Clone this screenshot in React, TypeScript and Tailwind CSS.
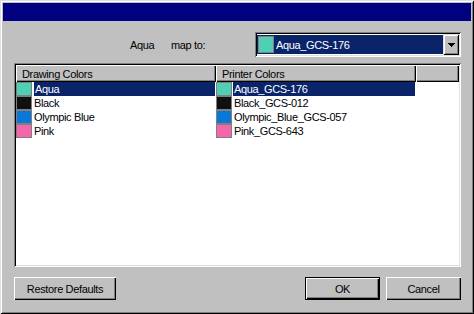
import React from "react";

const rows = [
  { name: "Aqua", printer: "Aqua_GCS-176", color: "#4fd0b4", selected: true },
  { name: "Black", printer: "Black_GCS-012", color: "#101010", selected: false },
  { name: "Olympic Blue", printer: "Olympic_Blue_GCS-057", color: "#0a78d8", selected: false },
  { name: "Pink", printer: "Pink_GCS-643", color: "#f466aa", selected: false },
];

function Cell({ color, label, selected, focus }: { color: string; label: string; selected: boolean; focus?: boolean }) {
  return (
    <div className="flex w-[200px] h-[14px]">
      <div className="w-[16px] h-[14px] border border-[#808080]" style={{ backgroundColor: color }} />
      <div
        className={
          "ml-[1px] w-[182px] h-[14px] pl-[1px] whitespace-nowrap " +
          (selected ? "bg-[#0a246a] text-white " : "text-black ") +
          (focus ? "border-l border-white" : "")
        }
      >
        {label}
      </div>
    </div>
  );
}

export default function App() {
  return (
    <div className="w-[474px] h-[314px] bg-[#c0c0c0] p-[3px] flex flex-col font-['Liberation_Sans',Arial,sans-serif] text-[11px] leading-[14px] tracking-[-0.35px] text-black shadow-[inset_1px_1px_#dfdfdf,inset_-1px_-1px_#000,inset_2px_2px_#fff,inset_-2px_-2px_#808080]">
      <div className="h-[18px] bg-[#000080] shrink-0" />
      <div className="flex-1 flex flex-col pl-[11px] pr-[10px] pt-[11px]">
        <div className="flex items-center h-[25px]">
          <span className="ml-[116px] w-[41px]">Aqua</span>
          <span className="w-[84px]">map to:</span>
          <div className="w-[206px] h-[25px] p-[2px] flex shadow-[inset_1px_1px_#808080,inset_-1px_-1px_#fff,inset_2px_2px_#000,inset_-2px_-2px_#dfdfdf]">
            <div className="flex-1 bg-white flex">
              <div className="flex-1 my-[1px] bg-[#0a246a] flex items-center text-white">
                <div className="ml-[1px] w-[16px] h-[17px] border border-[#808080] bg-[#4fd0b4]" />
                <span className="ml-[2px]">Aqua_GCS-176</span>
              </div>
              <div className="w-[16px] flex items-center justify-center shadow-[inset_1px_1px_#dfdfdf,inset_-1px_-1px_#000,inset_2px_2px_#fff,inset_-2px_-2px_#808080] bg-[#c0c0c0]">
                <svg width="7" height="4" viewBox="0 0 7 4" shapeRendering="crispEdges">
                  <rect x="0" y="0" width="7" height="1" fill="#000" />
                  <rect x="1" y="1" width="5" height="1" fill="#000" />
                  <rect x="2" y="2" width="3" height="1" fill="#000" />
                  <rect x="3" y="3" width="1" height="1" fill="#000" />
                </svg>
              </div>
            </div>
          </div>
        </div>

        <div className="mt-[6px] h-[204px] p-[2px] bg-white flex flex-col shadow-[inset_1px_1px_#808080,inset_-1px_-1px_#fff,inset_2px_2px_#000,inset_-2px_-2px_#dfdfdf]">
          <div className="flex h-[17px] shrink-0 bg-[#c0c0c0]">
            <div className="w-[200px] pl-[6px] flex items-center shadow-[inset_1px_1px_#fff,inset_-1px_-1px_#000,inset_-2px_-2px_#808080]">
              Drawing Colors
            </div>
            <div className="w-[200px] pl-[6px] flex items-center shadow-[inset_1px_1px_#fff,inset_-1px_-1px_#000,inset_-2px_-2px_#808080]">
              Printer Colors
            </div>
            <div className="flex-1 shadow-[inset_1px_1px_#fff,inset_-1px_-1px_#000,inset_-2px_-2px_#808080]" />
          </div>
          <div className="flex flex-col">
            {rows.map((r) => (
              <div key={r.name} className="flex">
                <Cell color={r.color} label={r.name} selected={r.selected} focus={r.selected} />
                <Cell color={r.color} label={r.printer} selected={r.selected} />
              </div>
            ))}
          </div>
        </div>

        <div className="mt-[10px] flex">
          <button className="w-[102px] h-[23px] flex items-center justify-center shadow-[inset_1px_1px_#fff,inset_-1px_-1px_#000,inset_-2px_-2px_#808080]">
            Restore Defaults
          </button>
          <div className="ml-auto flex gap-[6px]">
            <button className="w-[75px] h-[23px] flex items-center justify-center shadow-[inset_0_0_0_1px_#000,inset_2px_2px_#fff,inset_-2px_-2px_#000,inset_-3px_-3px_#808080]">
              OK
            </button>
            <button className="w-[75px] h-[23px] flex items-center justify-center shadow-[inset_1px_1px_#fff,inset_-1px_-1px_#000,inset_-2px_-2px_#808080]">
              Cancel
            </button>
          </div>
        </div>
      </div>
    </div>
  );
}
